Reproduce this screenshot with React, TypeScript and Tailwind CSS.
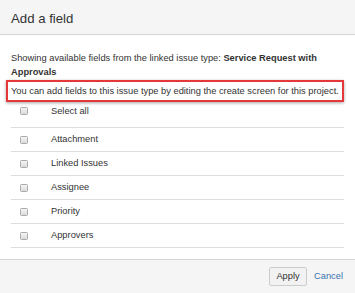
import React from "react";

const fields = ["Attachment", "Linked Issues", "Assignee", "Priority", "Approvers"];

function Box() {
  return (
    <span className="block w-[8px] h-[8px] rounded-[1.5px] border border-[#a9a9a9] bg-gradient-to-b from-[#f4f4f4] to-[#dcdcdc]" />
  );
}

export default function App() {
  return (
    <div className="w-[355px] h-[293px] bg-white flex flex-col font-['Liberation_Sans',Arial,sans-serif] text-[#333] overflow-hidden">
      {/* Header */}
      <div className="h-[35px] shrink-0 flex items-center px-[11px] bg-[#f5f5f5] border-b border-[#d5d5d5]">
        <h2 className="text-[13.2px] leading-none pt-[3px]">Add a field</h2>
      </div>

      {/* Body */}
      <div className="flex-1 px-[11px] pt-[16px]">
        <p className="text-[9.3px] leading-[14px]">
          Showing available fields from the linked issue type:{" "}
          <strong className="font-bold">Service Request with Approvals</strong>
        </p>
        <div className="mt-[1px] -ml-[5px] pl-[3px] py-[2px] border-2 border-[#e5383b] shadow-[0_1px_3px_rgba(0,0,0,0.35)] text-[9.3px] leading-[14px]">
          You can add fields to this issue type by editing the create screen for this project.
        </div>

        <ul className="text-[9.3px]">
          <li className="flex items-start pt-[2px] pb-[9px] h-[26px] border-b border-[#ddd]">
            <span className="w-[40px] h-[14px] flex items-center pl-[9px]">
              <Box />
            </span>
            <span className="leading-[14px]">Select all</span>
          </li>
          {fields.map((f) => (
            <li key={f} className="flex items-center h-[24px] border-b border-[#ddd]">
              <span className="w-[40px] flex items-center pl-[9px]">
                <Box />
              </span>
              <span>{f}</span>
            </li>
          ))}
        </ul>
      </div>

      {/* Footer */}
      <div className="h-[34px] shrink-0 flex items-center justify-end gap-[7px] pr-[12px] bg-[#f5f5f5] border-t border-[#d5d5d5]">
        <button
          type="button"
          className="h-[19px] w-[38px] rounded-[2px] border border-[#ccc] bg-[#f2f2f2] text-[9.3px] text-[#333]"
        >
          Apply
        </button>
        <a href="#" className="text-[9.3px] text-[#3b73af]">
          Cancel
        </a>
      </div>
    </div>
  );
}
